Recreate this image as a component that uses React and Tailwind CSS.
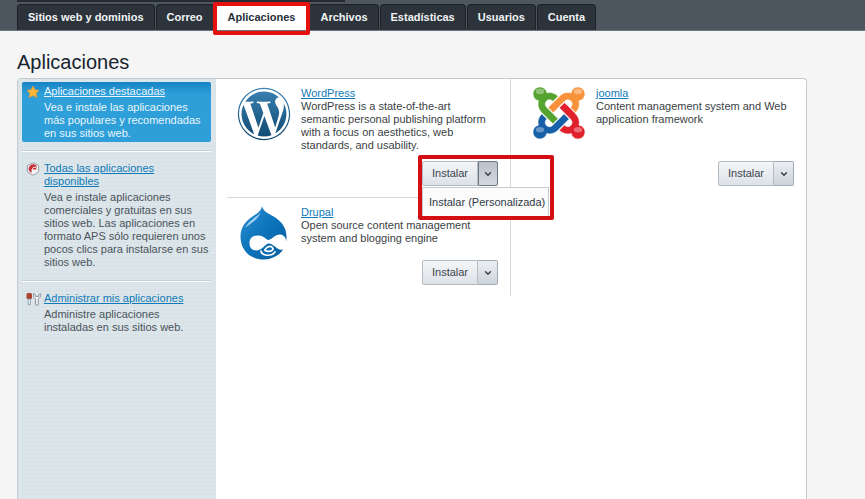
import React from "react";
import { FaWordpress } from "react-icons/fa";
import { ChevronDown } from "lucide-react";

const tabs = [
  "Sitios web y dominios",
  "Correo",
  "Aplicaciones",
  "Archivos",
  "Estadísticas",
  "Usuarios",
  "Cuenta",
];

const StarIcon = () => (
  <svg width="14" height="14" viewBox="0 0 14 14">
    <path
      d="M7 1l1.8 3.8 4.2.6-3 2.9.8 4.3L7 10.5l-3.8 2.1.8-4.3-3-2.9 4.2-.6z"
      fill="#fdb93c"
      stroke="#e09a35"
      strokeWidth="0.8"
    />
  </svg>
);

const ApsIcon = () => (
  <svg width="14" height="14" viewBox="0 0 14 14">
    <path d="M7 .7l5.6 2.8v6.4L7 13.3 1.4 9.9V3.500z" fill="#f5f5f5" stroke="#99a2a8" />
    <path d="M10.500 3.800A4.500 4.500 0 1 0 5.500 11V7.500h5z" fill="#c9313a" />
    <path d="M6.500 8a2 2 0 0 1 4-1.500" stroke="#f5f5f5" fill="none" />
  </svg>
);

const ToolsIcon = () => (
  <svg width="15" height="14" viewBox="0 0 15 14">
    <rect x="0.500" y="1" width="5.500" height="6" rx="1.500" fill="#a8452c" />
    <path d="M2.200 7h2.200v5.500H2.200z" fill="#e8edf0" stroke="#7f97a8" strokeWidth="0.8" />
    <path
      d="M7.500 1.500v3.500l2 2V12a1.200 1.200 0 0 0 2.800 0V7l2-2V1.500L12.500 3v1.500h-3V3z"
      fill="#eef1f2"
      stroke="#868f95"
      strokeWidth="0.9"
    />
  </svg>
);

const WordPressLogo = () => (
  <svg className="shrink-0" width="54" height="54" viewBox="0 0 54 54">
    <defs>
      <linearGradient id="wp" x1="0" y1="0" x2="0" y2="1">
        <stop offset="0" stopColor="#3c82b4" />
        <stop offset="1" stopColor="#0d4870" />
      </linearGradient>
    </defs>
    <FaWordpress size={54} fill="url(#wp)" />
  </svg>
);

const DrupalLogo = () => (
  <svg className="shrink-0" width="48" height="54" viewBox="0 0 48 54">
    <defs>
      <linearGradient id="drop" x1="0" y1="0" x2="1" y2="1">
        <stop offset="0" stopColor="#2f8fd0" />
        <stop offset="0.5" stopColor="#0b73ba" />
        <stop offset="1" stopColor="#0a5c9c" />
      </linearGradient>
    </defs>
    <path
      d="M22 0C23 6 30 8 36 12c7 5 10.500 11 10.500 19C46.500 45 36 53.500 23.500 53.500 10 53.500.5 44 .5 30.500.5 22 5 16 11 11.500 16 8 21 6 22 0z"
      fill="url(#drop)"
    />
    <path d="M21 5c-1 4-5 5-8 8-3 2-6 5-8 9 5-5 14-8 16-17z" fill="#9fd0f0" />
    <path
      d="M9.500 37c0-6 5-8 9.500-7.500 5 .5 7 4 9.500 4.500 3.500-.5 6.500-5.500 11.500-5.500 5 .5 7 5 6 10.500-1 4.500-4 6-7.500 4-4-2.500-7-6-10-5.500-4 1-6 6.500-11.500 7-5.500 0-7.500-3-7.500-7.500z"
      fill="#fff"
    />
    <path
      d="M25 43.500c3-4 7-4 8-1 0 3-5 3.500-8 2M21 45c1 5.500 11 5.500 14 1"
      fill="none"
      stroke="#fff"
      strokeWidth="1.700"
      strokeLinecap="round"
    />
  </svg>
);

const JoomlaLogo = () => (
  <svg className="shrink-0" width="52" height="52" viewBox="0 32 448 448">
    <g stroke="#fff" strokeWidth="5">
      <path
        d="M.6 92.1C.6 58.8 27.4 32 60.4 32c30 0 54.5 21.9 59.2 50.2 32.6-7.6 67.1.6 96.5 30l-44.3 44.3c-20.5-20.5-42.6-16.3-55.4-3.5-14.3 14.3-14.3 37.9 0 52.2l99.5 99.5-44 44.3c-87.7-87.2-49.7-49.7-99.8-99.7-26.8-26.5-35-64.8-24.8-98.9C20.4 144.6.6 120.7.6 92.1z"
        fill="#55a430"
      />
      <path
        d="M130.1 208.5l44.3 44.3c10-10 89.7-89.7 99.7-99.8 14.3-14.3 37.6-14.3 51.9 0 12.8 12.8 17 35-3.5 55.4l44 44.3c31.2-31.2 38.5-67.6 28.9-101.2 29.2-4.1 51.9-29.2 51.9-59.5 0-33.2-26.8-60.1-59.8-60.1-30.3 0-55.4 22.5-59.5 51.6-33.8-9.9-71.7-1.5-98.3 25.1-18.3 19.1-71.1 71.5-99.6 99.9z"
        fill="#f7923a"
      />
      <path
        d="M396.4 360.7c8.2-32.7-.9-68.5-26.3-93.9-11.8-12.2 5-4.7-99.5-99.7l-44.3 44.3 99.7 99.7c14.3 14.3 14.3 37.6 0 51.9-12.8 12.8-35 17-55.4-3.5l-44 44.3c27.6 30.2 68 38.8 102.7 28 5.5 27.4 29.7 48.1 58.9 48.1 33 0 59.8-26.8 59.8-60.1 0-30.2-22.5-55-51.6-59.1z"
        fill="#e0202a"
      />
      <path
        d="M312.1 307.6l-44-44.3c-87 86.4-50.4 50.4-99.7 99.8-14.3 14.3-37.6 14.3-51.9 0-13.1-13.4-16.9-35.3 3.2-55.4l-44-44.3c-30.2 30.2-38 65.2-29.5 98.3-26.7 6-46.2 29.9-46.2 58.2C0 453.2 26.8 480 59.8 480c28.6 0 52.5-19.8 58.6-46.7 32.7 8.2 68.5-.6 94.2-26 32.1-32 12.2-12.4 99.5-99.7z"
        fill="#1560a8"
      />
    </g>
    <g fill="#fff" opacity="0.35">
      <ellipse cx="60" cy="70" rx="36" ry="24" />
      <ellipse cx="388" cy="70" rx="36" ry="24" />
      <ellipse cx="60" cy="400" rx="36" ry="24" />
      <ellipse cx="388" cy="400" rx="36" ry="24" />
    </g>
  </svg>
);

const InstallButton = ({ open }) => (
  <div className="relative mt-auto flex h-[25px] w-[76px] self-end">
    <button className="flex-1 rounded-l-xs border border-[#b4bcc2] bg-linear-to-b from-[#f4f6f8] to-[#dde2e7] text-[#3c4650]">
      Instalar
    </button>
    <button
      aria-label="Más opciones"
      aria-expanded={Boolean(open)}
      className={
        open
          ? "flex w-5 items-center justify-center rounded-r-xs border border-[#6f7880] bg-linear-to-b from-[#b9c0c8] to-[#d3d9df] text-[#303a44]"
          : "flex w-5 items-center justify-center rounded-r-xs border border-l-0 border-[#a3acb4] bg-linear-to-b from-[#eceff2] to-[#ccd3da] text-[#303a44]"
      }
    >
      <ChevronDown size={10} strokeWidth={3} />
    </button>
    {open && (
      <div className="absolute top-[26px] left-0 z-10 w-[127px] border border-[#c6cbd0] bg-[#fbfbfc]">
        <button className="h-7 w-full pl-1.5 text-left whitespace-nowrap text-[#303a44]">
          Instalar (Personalizada)
        </button>
      </div>
    )}
    {open && (
      <div className="pointer-events-none absolute -top-1.5 -left-1 z-20 h-[65px] w-[136px] rounded-xs border-4 border-[#d40f14]" />
    )}
  </div>
);

const AppCard = ({ logo, name, text, open }) => (
  <div className="flex h-full flex-col pt-2 pr-3 pb-[11px] pl-[22px]">
    <div className="flex">
      <div className="mr-[11px] flex w-[52px] shrink-0 justify-center">{logo}</div>
      <div className="min-w-0 flex-1 pr-1">
        <a href="#" className="block text-[#0e7ab8] underline">{name}</a>
        <p>{text}</p>
      </div>
    </div>
    <InstallButton open={open} />
  </div>
);

const SideItem = ({ icon, title, text, active }) => (
  <div
    className={
      active
        ? "flex rounded-xs bg-linear-to-b from-[#1583c4] via-[#2e9fd8] via-20% to-[#2e9fd8] pt-[3px] pb-0.5 text-[#eaf6fc]"
        : "flex pt-2.5 pb-[11px] text-[#4a545c]"
    }
  >
    <div className="w-[22px] shrink-0 pl-1">{icon}</div>
    <div className="min-w-0 flex-1">
      <a
        href="#"
        className={active ? "block text-[#eaf6fc] underline" : "block text-[#0e7ab8] underline"}
      >
        {title}
      </a>
      <p className="mt-[3px]">{text}</p>
    </div>
  </div>
);

const App = () => {
  return (
    <div className="flex min-h-screen flex-col bg-[#f5f5f5] font-['Liberation_Sans',Arial,sans-serif] text-[11px] leading-[13px] text-[#3a3f44]">
      {/* TABS */}
      <header className="border-b border-[#6b737a] bg-[#4d565f] px-[17px]">
        <div className="h-0.5 w-[328px] bg-[#252c33]" />
        <nav className="mt-0.5 flex gap-px">
          {tabs.map((tab) =>
            tab === "Aplicaciones" ? (
              <a
                key={tab}
                href="#"
                className="relative mx-0.5 flex h-[26px] items-center bg-white px-[11px] font-bold text-[#26313b]"
              >
                {tab}
                <span className="pointer-events-none absolute -top-0.5 -right-1 -bottom-[5px] -left-1 rounded-xs border-4 border-[#e8100f]" />
              </a>
            ) : (
              <a
                key={tab}
                href="#"
                className="flex h-[26px] items-center rounded-t-sm border border-b-0 border-[#1b2127] bg-[#2c333b] px-2.5 font-bold text-[#f2f4f5]"
              >
                {tab}
              </a>
            )
          )}
        </nav>
      </header>

      <main className="flex flex-1 flex-col pt-[19px] pr-[58px] pl-[17px]">
        <h1 className="mb-1 text-[20px] leading-6 text-[#16242f]">Aplicaciones</h1>

        <div className="flex flex-1 rounded-t-sm border border-b-0 border-[#c3cdd0] bg-white">
          {/* SIDEBAR */}
          <aside className="w-[198px] shrink-0 bg-[#dde6ea] bg-[repeating-linear-gradient(0deg,#d8e1e6_0px_1px,transparent_1px_4px),repeating-linear-gradient(90deg,#d8e1e6_0px_1px,transparent_1px_4px)] pt-[3px] pr-[5px] pl-1">
            <SideItem
              active
              icon={<StarIcon />}
              title="Aplicaciones destacadas"
              text="Vea e instale las aplicaciones más populares y recomendadas en sus sitios web."
            />
            <div className="mt-2 border-t border-b border-t-[#c5d0d6] border-b-white" />
            <SideItem
              icon={<ApsIcon />}
              title="Todas las aplicaciones disponibles"
              text="Vea e instale aplicaciones comerciales y gratuitas en sus sitios web. Las aplicaciones en formato APS sólo requieren unos pocos clics para instalarse en sus sitios web."
            />
            <div className="border-t border-b border-t-[#c5d0d6] border-b-white" />
            <SideItem
              icon={<ToolsIcon />}
              title="Administrar mis aplicaciones"
              text="Administre aplicaciones instaladas en sus sitios web."
            />
          </aside>

          {/* APPS */}
          <section className="grid flex-1 grid-cols-2 content-start">
            <div className="border-r border-[#d5dadd]">
              <div className="h-[118px]">
                <AppCard
                  open
                  logo={<WordPressLogo />}
                  name="WordPress"
                  text="WordPress is a state-of-the-art semantic personal publishing platform with a focus on aesthetics, web standards, and usability."
                />
              </div>
              <div className="ml-[11px] border-t border-[#d5dadd]" />
              <div className="h-[98px]">
                <AppCard
                  logo={<DrupalLogo />}
                  name="Drupal"
                  text="Open source content management system and blogging engine"
                />
              </div>
            </div>
            <div className="h-[118px]">
              <AppCard
                logo={<JoomlaLogo />}
                name="joomla"
                text="Content management system and Web application framework"
              />
            </div>
          </section>
        </div>
      </main>
    </div>
  );
};

export default App;
